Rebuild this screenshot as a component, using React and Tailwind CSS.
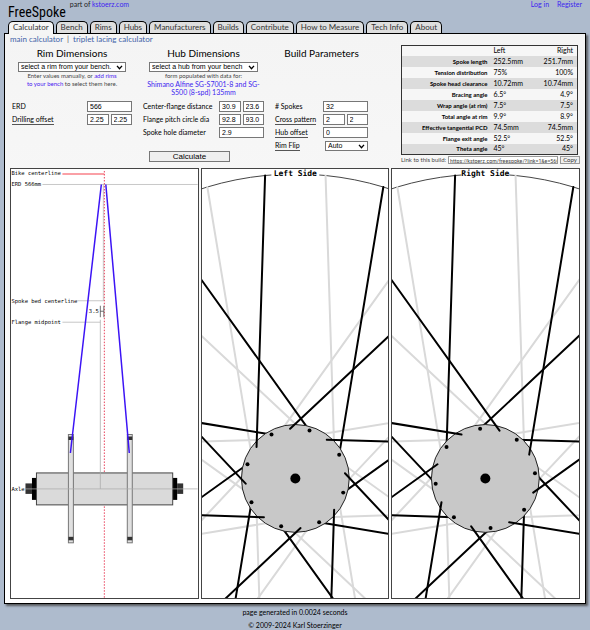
import React from "react";

const tabs = [
  "Calculator",
  "Bench",
  "Rims",
  "Hubs",
  "Manufacturers",
  "Builds",
  "Contribute",
  "How to Measure",
  "Tech Info",
  "About",
];

const results = [
  ["Spoke length", "252.5mm", "251.7mm"],
  ["Tension distribution", "75%", "100%"],
  ["Spoke head clearance", "10.72mm", "10.74mm"],
  ["Bracing angle", "6.5°", "4.9°"],
  ["Wrap angle (at rim)", "7.5°", "7.5°"],
  ["Total angle at rim", "9.9°", "8.9°"],
  ["Effective tangential PCD", "74.5mm", "74.5mm"],
  ["Flange exit angle", "52.5°", "52.5°"],
  ["Theta angle", "45°", "45°"],
];

const fieldClass =
  "h-[11px] min-w-0 border border-[#777] bg-white pl-0.5 font-['Liberation_Sans',Arial,sans-serif] text-[7px] leading-[9px] text-black";
const selectClass =
  "border border-[#777] bg-white font-['Liberation_Sans',Arial,sans-serif] text-[7px] leading-[8px] text-black appearance-none";

// Label on the left, one or two inputs on the right
const Field = ({ id, label, values, hint = false }) => (
  <div className="flex h-[13px] items-center justify-between">
    <label
      htmlFor={`${id}-0`}
      className={`text-[7px] leading-[9px] whitespace-nowrap text-black ${hint ? "border-b border-[#555]" : ""}`}
    >
      {label}
    </label>
    <div className="flex w-[45px] gap-0.5">
      {values.map((value, i) => (
        <input
          key={i}
          id={`${id}-${i}`}
          aria-label={`${label} ${i + 1}`}
          defaultValue={value}
          className={`${fieldClass} w-full`}
        />
      ))}
    </div>
  </div>
);

const Select = ({ id, label, option, className }) => (
  <div className={`relative ${className}`}>
    <select id={id} aria-label={label} className={`${selectClass} block h-[10px] w-full pl-0.5`}>
      <option>{option}</option>
    </select>
    <svg viewBox="0 0 8 6" className="pointer-events-none absolute top-[3px] right-[3px] h-[5px] w-[7px]">
      <path d="M1 1 L4 4.5 L7 1" fill="none" stroke="#000" strokeWidth="1.6" />
    </svg>
  </div>
);

const Panel = ({ label, children }) => (
  <figure className="border border-[#444] bg-white">
    <svg viewBox="0 0 374 860" className="block h-auto w-full" role="img" aria-label={label}>
      {children}
    </svg>
  </figure>
);

const CrossSection = () => (
  <Panel label="Hub cross section">
    <g stroke="#b4b4b4" strokeWidth="1.5">
      <path d="M63 31 H374" />
      <path d="M133 264 H186 M185 31 V264" />
      <path d="M103 307 H179" />
    </g>
    <path d="M103 10 H187" stroke="#f98088" strokeWidth="3" />
    <path d="M187 4 V860" stroke="#e8405a" strokeWidth="2" strokeDasharray="3 3" />

    <rect x="29" y="630" width="13" height="21" fill="#333" />
    <rect x="333" y="630" width="12" height="21" fill="#333" />
    <rect x="42" y="619" width="9" height="44" />
    <rect x="324" y="619" width="9" height="44" />
    <rect x="51" y="609" width="273" height="64" fill="#dadada" stroke="#444" strokeWidth="2" />
    {[115, 233].map((x) => (
      <g key={x}>
        <rect x={x} y="532" width="10" height="217" fill="#e0e0e0" stroke="#777" strokeWidth="2" />
        <rect x={x} y="536" width="10" height="7" fill="#333" />
        <rect x={x} y="737" width="10" height="7" fill="#333" />
      </g>
    ))}
    <path d="M28 641 H374 M179 302 V641" fill="none" stroke="#aaa" strokeWidth="1.5" />
    <path d="M181 31 L119 569 M190 31 L237 569" stroke="#3c14f5" strokeWidth="3" />
    <path d="M179 274 V297 M186 274 V297 M179 285 H186" stroke="#444" strokeWidth="1.5" />

    <g className="font-['DejaVu_Sans_Mono',monospace]" fontSize="11" fill="#000">
      <text x="1" y="13">Bike centerline</text>
      <text x="1" y="35">ERD 566mm</text>
      <text x="1" y="268">Spoke bed centerline</text>
      <text x="156" y="289">3.5</text>
      <text x="1" y="311">Flange midpoint</text>
      <text x="1" y="645">Axle</text>
    </g>
  </Panel>
);

const CX = 187;
const CY = 620;
const RIM = 610;
const FLANGE = 108;
const PCD = 100;

const polar = (r, deg) => [
  CX + r * Math.cos((deg * Math.PI) / 180),
  CY + r * Math.sin((deg * Math.PI) / 180),
];

// Two groups of eight spokes, crossing in opposite directions
const steps = [0, 45, 90, 135, 180, 225, 270, 315];
const trailing = steps.map((a) => ({ hole: a - 141, rim: a - 95.7 }));
const leading = steps.map((a) => ({ hole: a - 28.5, rim: a - 73.2 }));
const opposite = [...trailing, ...leading].map(({ hole, rim }) => ({ hole: 180 - hole, rim: 180 - rim }));

const Spoke = ({ hole, rim, color }) => {
  const [x1, y1] = polar(PCD, hole);
  const [x2, y2] = polar(RIM, rim);
  return <line x1={x1} y1={y1} x2={x2} y2={y2} stroke={color} strokeWidth="4" strokeLinecap="round" />;
};

const WheelView = ({ title, front, back }) => (
  <Panel label={title}>
    <circle cx={CX} cy={CY} r={RIM} fill="none" stroke="#444" strokeWidth="2" />
    {opposite.map((s, i) => (
      <Spoke key={i} {...s} color="#d9d9d9" />
    ))}
    {back.map((s, i) => (
      <Spoke key={i} {...s} color="#000" />
    ))}
    <circle cx={CX} cy={CY} r={FLANGE} fill="#c8c8c8" stroke="#222" strokeWidth="2" />
    {back.map(({ hole }) => {
      const [x, y] = polar(PCD, hole);
      return <circle key={hole} cx={x} cy={y} r="4" />;
    })}
    {front.map((s, i) => (
      <Spoke key={i} {...s} color="#000" />
    ))}
    <circle cx={CX} cy={CY} r="10" />
    <rect x="139" y="0" width="96" height="16" fill="#fff" />
    <text
      x={CX}
      y="14"
      textAnchor="middle"
      fontSize="16"
      fontWeight="bold"
      className="font-['DejaVu_Sans_Mono',monospace]"
    >
      {title}
    </text>
  </Panel>
);

const ResultsTable = () => (
  <table className="w-full border border-[#333] bg-[#f6f6f6] text-[7px] leading-[9px] text-black">
    <thead>
      <tr className="h-[10px]">
        <th className="w-1/2" />
        <th className="pl-1 text-left font-normal">Left</th>
        <th className="pr-1 text-right font-normal">Right</th>
      </tr>
    </thead>
    <tbody>
      {results.map(([name, left, right]) => (
        <tr key={name} className="h-[11px] odd:bg-[#dcdcdc]">
          <th scope="row" className="pr-0.5 text-right text-[6px] font-bold whitespace-nowrap">{name}</th>
          <td className="pl-1">{left}</td>
          <td className="pr-1 text-right">{right}</td>
        </tr>
      ))}
    </tbody>
  </table>
);

export default function App() {
  return (
    <div className="min-h-screen bg-[#aebbcd] px-1 font-[Lato,sans-serif] text-[#222]">
      <header className="flex h-[21px] items-start justify-between pr-1 text-[7px] leading-[9px]">
        <div className="flex items-start gap-1 pl-1">
          <h1 className="pt-1 font-['Roboto_Condensed','Liberation_Sans',sans-serif] text-[14px] leading-[16px] text-black">
            FreeSpoke
          </h1>
          <p>
            part of <a href="#home" className="text-[#3d1ff0]">kstoerz.com</a>
          </p>
        </div>
        <nav className="flex gap-2 text-[#3d1ff0]">
          <a href="#login">Log in</a>
          <a href="#register">Register</a>
        </nav>
      </header>

      <nav className="flex gap-0.5 pl-1 text-[8px] leading-[11px]">
        {tabs.map((tab, i) => (
          <a
            key={tab}
            href={`#${tab}`}
            className={`relative rounded-t-[5px] border border-b-0 border-black px-1 ${
              i === 0 ? "z-10 -mb-px bg-[#f5f5f5] text-[#333]" : "bg-[#dedede] text-[#333]"
            }`}
          >
            {tab}
          </a>
        ))}
      </nav>

      <main className="border border-black bg-linear-to-b from-[#f4f4f4] to-white px-[5px] pb-1 shadow-[2px_2px_2px_#444c]">
        <div className="flex gap-1 text-[8px] leading-[10px] text-[#3f62a8]">
          <a href="#main">main calculator</a>
          <span className="text-[#555]">|</span>
          <a href="#triplet">triplet lacing calculator</a>
        </div>

        <form className="flex h-[124px] justify-between" onSubmit={(e) => e.preventDefault()}>
          <div className="flex gap-[11px] pl-0.5">
            <section className="w-[120px]">
              <h2 className="py-0.5 text-center text-[10px] leading-[14px] text-black">Rim Dimensions</h2>
              <Select id="rim" label="Rim" option="select a rim from your bench." className="mx-1.5" />
              <p className="mx-auto h-[28px] w-[92px] text-center text-[6px] leading-[8px] text-[#444]">
                Enter values manually, or <a href="#rims" className="text-[#4a20f0]">add rims to your bench</a> to select them here.
              </p>
              <Field id="erd" label="ERD" values={["566"]} />
              <Field id="drilling" label="Drilling offset" values={["2.25", "2.25"]} hint />
            </section>

            <section className="w-[121px]">
              <h2 className="py-0.5 text-center text-[10px] leading-[14px] text-black">Hub Dimensions</h2>
              <Select id="hub" label="Hub" option="select a hub from your bench" className="mx-1.5" />
              <p className="h-[28px] text-center text-[6px] leading-[8px] text-[#444]">
                form populated with data for:
                <a href="#hub" className="block text-[7px] leading-[8px] text-[#3d1ff0]">
                  Shimano Alfine SG-S7001-8 and SG-S500 (8-spd) 135mm
                </a>
              </p>
              <Field id="center-flange" label="Center-flange distance" values={["30.9", "23.6"]} />
              <Field id="pcd" label="Flange pitch circle dia" values={["92.8", "93.0"]} />
              <Field id="hole" label="Spoke hole diameter" values={["2.9"]} />
              <button
                type="submit"
                className="mt-3 ml-1.5 block h-[11px] w-[81px] border border-[#777] bg-[#efefef] font-['Liberation_Sans',Arial,sans-serif] text-[8px] leading-[9px] text-black"
              >
                Calculate
              </button>
            </section>

            <section className="w-[93px]">
              <h2 className="py-0.5 text-center text-[10px] leading-[14px] whitespace-nowrap text-black">Build Parameters</h2>
              <div className="pt-[38px]">
                <Field id="spokes" label="# Spokes" values={["32"]} />
                <Field id="cross" label="Cross pattern" values={["2", "2"]} hint />
                <Field id="hub-offset" label="Hub offset" values={["0"]} hint />
                <div className="flex h-[13px] items-center justify-between">
                  <label htmlFor="flip" className="border-b border-[#555] text-[7px] leading-[9px] text-black">Rim Flip</label>
                  <Select id="flip" label="Rim Flip" option="Auto" className="w-[43px]" />
                </div>
              </div>
            </section>
          </div>

          <aside className="w-[179px] pt-px">
            <div className="pr-0.5">
              <ResultsTable />
            </div>
            <div className="flex items-center gap-0.5 pt-px">
              <label htmlFor="link" className="shrink-0 text-[6px] leading-[8px] text-[#444]">Link to this build:</label>
              <input
                id="link"
                readOnly
                defaultValue="https://kstoerz.com/freespoke/?link=1&e=566"
                className="h-[8px] min-w-0 flex-1 border border-[#999] bg-white pl-px font-['Roboto_Condensed','Liberation_Sans',sans-serif] text-[6px] leading-[6px] text-[#444]"
              />
              <button type="button" className="h-[8px] w-5 shrink-0 border border-[#999] bg-[#efefef] text-[6px] leading-[6px] text-[#333]">
                Copy
              </button>
            </div>
          </aside>
        </form>

        <div className="grid grid-cols-3 gap-0.5">
          <CrossSection />
          <WheelView title="Left Side" front={trailing} back={leading} />
          <WheelView title="Right Side" front={leading} back={trailing} />
        </div>
      </main>

      <footer className="pt-0.5 text-center text-[7px] leading-[13px] text-black">
        <p>page generated in 0.0024 seconds</p>
        <p>© 2009-2024 Karl Stoerzinger</p>
      </footer>
    </div>
  );
}
